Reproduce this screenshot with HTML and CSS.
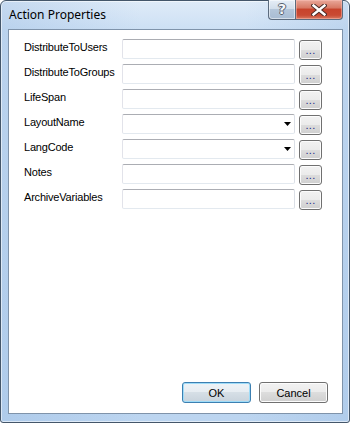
FILE: index.html
```html
<!DOCTYPE html>
<html>
<head>
<meta charset="utf-8">
<title>Action Properties</title>
<link rel="stylesheet" href="styles.css">
</head>
<body>
<div class="window">
  <div class="titlebar">
    <span class="title">Action Properties</span>
    <div class="caption-buttons">
      <div class="cap help"><span class="help-glyph">?</span></div>
      <div class="cap close">
        <svg width="16" height="12" viewBox="0 0 16 12" class="close-x">
          <path d="M2.5 1.5 L13.5 10.5 M13.5 1.5 L2.5 10.5" stroke="#4a2a26" stroke-width="4.4" stroke-linecap="square" fill="none"/>
          <path d="M2.5 1.5 L13.5 10.5 M13.5 1.5 L2.5 10.5" stroke="#ffffff" stroke-width="2.4" stroke-linecap="square" fill="none"/>
        </svg>
      </div>
    </div>
  </div>
  <div class="client">
    <div class="form">
      <span class="label">DistributeToUsers</span><div class="field"></div><button class="dots">...</button>
      <span class="label">DistributeToGroups</span><div class="field"></div><button class="dots">...</button>
      <span class="label">LifeSpan</span><div class="field"></div><button class="dots">...</button>
      <span class="label">LayoutName</span><div class="field combo"><svg width="7" height="4" viewBox="0 0 7 4"><path d="M0 0 H7 L3.5 4 Z" fill="#000"/></svg></div><button class="dots">...</button>
      <span class="label">LangCode</span><div class="field combo"><svg width="7" height="4" viewBox="0 0 7 4"><path d="M0 0 H7 L3.5 4 Z" fill="#000"/></svg></div><button class="dots">...</button>
      <span class="label">Notes</span><div class="field"></div><button class="dots">...</button>
      <span class="label">ArchiveVariables</span><div class="field"></div><button class="dots">...</button>
    </div>
    <div class="footer">
      <button class="btn default">OK</button>
      <button class="btn">Cancel</button>
    </div>
  </div>
</div>
</body>
</html>
```

FILE: styles.css
```css
html, body {
  margin: 0;
  padding: 0;
}
body {
  width: 350px;
  height: 423px;
  overflow: hidden;
  background: #ffffff;
  font-family: "Liberation Sans", Arial, sans-serif;
}
.window {
  box-sizing: border-box;
  width: 350px;
  height: 423px;
  border: 1px solid #44566a;
  border-radius: 6px 6px 3px 3px;
  background:
    linear-gradient(90deg, rgba(150,185,225,0.35) 0, rgba(255,255,255,0) 40%, rgba(255,255,255,0) 70%, rgba(150,185,225,0.3) 100%),
    linear-gradient(180deg, #dfebf8 0, #cde0f4 28px, #bcd5f0 100%);
  box-shadow: inset 0 0 0 1px rgba(255,255,255,0.55);
  display: flex;
  flex-direction: column;
  padding: 0 6px 8px 7px;
}
.titlebar {
  height: 28px;
  display: flex;
  align-items: flex-start;
}
.title {
  font-family: "Noto Sans", "Open Sans", sans-serif;
  font-size: 12px;
  line-height: 16px;
  margin-top: 6px;
  margin-left: 1px;
  color: #000;
}
.caption-buttons {
  margin-left: auto;
  display: flex;
  margin-top: -1px;
}
.cap {
  box-sizing: border-box;
  height: 20px;
  display: flex;
  align-items: center;
  justify-content: center;
  border: 1px solid #5b6b7e;
  border-top: none;
}
.help {
  width: 27px;
  border-right: none;
  border-radius: 0 0 0 4px;
  background: linear-gradient(180deg, #e6eef7 0, #d2deeb 45%, #b4c6da 50%, #a8bcd3 100%);
  box-shadow: inset 0 0 0 1px rgba(255,255,255,0.5);
}
.help-glyph {
  font-family: "DejaVu Sans", sans-serif;
  font-weight: bold;
  font-size: 14px;
  line-height: 15px;
  color: #f4f6f9;
  text-shadow: 1px 0 0 #56616f, -1px 0 0 #56616f, 0 1px 0 #56616f, 0 -1px 0 #56616f;
}
.close {
  width: 48px;
  border-radius: 0 0 4px 0;
  background: linear-gradient(180deg, #e9a89a 0, #d87a66 40%, #c7432c 50%, #c94a33 80%, #d77a62 100%);
  box-shadow: inset 0 0 0 1px rgba(255,200,190,0.45);
}
.client {
  flex: 1;
  display: flex;
  flex-direction: column;
  background: #ffffff;
  border: 1px solid #7f93aa;
  padding: 9px 14px 10px 15px;
}
.form {
  display: grid;
  grid-template-columns: 98px 173px 23px;
  grid-auto-rows: 20px;
  column-gap: 0;
  row-gap: 5px;
  font-size: 11px;
}
.label {
  line-height: 16px;
  color: #000;
  white-space: nowrap;
  letter-spacing: -0.2px;
}
.field {
  box-sizing: border-box;
  height: 20px;
  background: #fff;
  border: 1px solid;
  border-color: #abadb3 #dbdfe6 #e3e9ef #e2e3ea;
  border-radius: 2px;
}
.combo {
  display: flex;
  align-items: center;
  justify-content: flex-end;
  padding-right: 3px;
}
.combo svg {
  display: block;
}
.dots {
  box-sizing: border-box;
  width: 23px;
  height: 20px;
  margin: 1px 0 0 4px;
  padding: 0 0 1px 0;
  border: 1px solid #707070;
  border-radius: 3px;
  background: linear-gradient(180deg, #f2f2f2 0, #ebebeb 50%, #dddddd 50%, #cfcfcf 100%);
  box-shadow: inset 0 0 0 1px #fcfcfc;
  font-family: "Liberation Sans", Arial, sans-serif;
  font-size: 11px;
  font-weight: normal;
  line-height: 14px;
  color: #1c2c86;
  letter-spacing: 0.3px;
}
.footer {
  margin-top: auto;
  display: flex;
  justify-content: flex-end;
  gap: 8px;
}
.btn {
  box-sizing: border-box;
  width: 69px;
  height: 21px;
  padding: 0;
  border: 1px solid #707070;
  border-radius: 3px;
  background: linear-gradient(180deg, #f2f2f2 0, #ebebeb 50%, #dddddd 50%, #cfcfcf 100%);
  box-shadow: inset 0 0 0 1px #fcfcfc;
  font-family: "Liberation Sans", Arial, sans-serif;
  font-size: 11px;
  color: #000;
}
.btn.default {
  border-color: #3c7fb1;
  box-shadow: inset 0 0 0 1px #9fdcf8;
  background: linear-gradient(180deg, #eef3f7 0, #e6ecf1 50%, #d6dfe6 50%, #c8d3dc 100%);
}
```
